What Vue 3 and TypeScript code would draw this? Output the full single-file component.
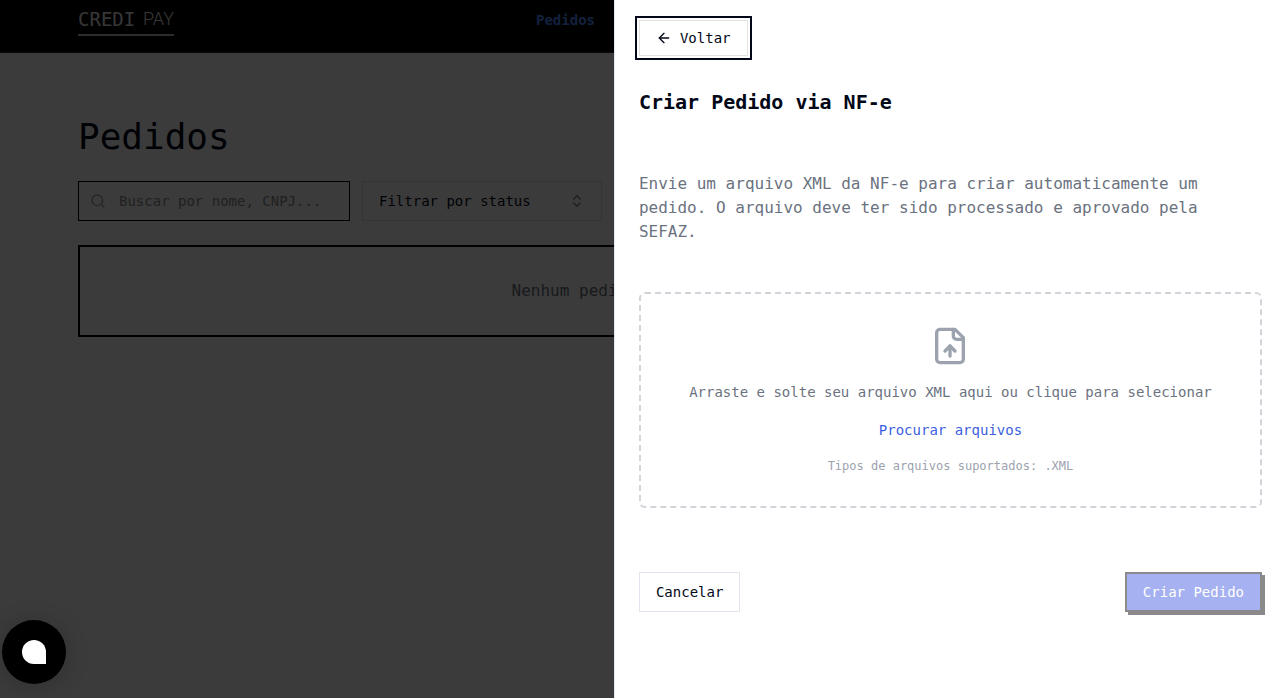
<script setup lang="ts">
import { ref } from 'vue'

const search = ref('')
const status = ref('')
const fileInput = ref<HTMLInputElement | null>(null)

function browse(): void {
  fileInput.value?.click()
}
</script>

<template>
  <div class="page">
    <header class="topbar">
      <a href="#" class="logo"><span class="logo-credi">CREDI</span><span class="logo-pay">PAY</span></a>
      <nav class="nav"><a href="#">Pedidos</a></nav>
    </header>
    <main class="content">
      <h1>Pedidos</h1>
      <div class="filters">
        <label class="search">
          <svg width="16" height="16" viewBox="0 0 24 24" fill="none" stroke="currentColor" stroke-width="2" stroke-linecap="round" stroke-linejoin="round" aria-hidden="true">
            <circle cx="11" cy="11" r="8" />
            <path d="m21 21-4.3-4.3" />
          </svg>
          <input v-model="search" type="text" aria-label="Buscar" placeholder="Buscar por nome, CNPJ..." />
        </label>
        <div class="status">
          <select v-model="status" aria-label="Filtrar por status">
            <option value="">Filtrar por status</option>
          </select>
          <svg width="16" height="16" viewBox="0 0 24 24" fill="none" stroke="currentColor" stroke-width="2" stroke-linecap="round" stroke-linejoin="round" aria-hidden="true">
            <path d="m7 15 5 5 5-5" />
            <path d="m7 9 5-5 5 5" />
          </svg>
        </div>
      </div>
      <section class="empty">Nenhum pedido encontrado.</section>
    </main>
  </div>

  <div class="overlay"></div>

  <aside class="drawer" role="dialog" aria-labelledby="drawer-title">
    <button type="button" class="back">
      <svg width="16" height="16" viewBox="0 0 24 24" fill="none" stroke="currentColor" stroke-width="2" stroke-linecap="round" stroke-linejoin="round" aria-hidden="true">
        <path d="m12 19-7-7 7-7" />
        <path d="M19 12H5" />
      </svg>
      Voltar
    </button>
    <h2 id="drawer-title">Criar Pedido via NF-e</h2>
    <p class="intro">
      Envie um arquivo XML da NF-e para criar automaticamente um pedido. O arquivo deve ter sido processado e aprovado pela SEFAZ.
    </p>
    <div class="dropzone">
      <svg width="40" height="40" viewBox="0 0 24 24" fill="none" stroke="currentColor" stroke-width="2" stroke-linecap="round" stroke-linejoin="round" aria-hidden="true">
        <path d="M15 2H6a2 2 0 0 0-2 2v16a2 2 0 0 0 2 2h12a2 2 0 0 0 2-2V7Z" />
        <path d="M14 2v4a2 2 0 0 0 2 2h4" />
        <path d="M12 12v6" />
        <path d="m15 15-3-3-3 3" />
      </svg>
      <p class="hint">Arraste e solte seu arquivo XML aqui ou clique para selecionar</p>
      <button type="button" class="browse" @click="browse">Procurar arquivos</button>
      <input ref="fileInput" type="file" accept=".xml" hidden aria-label="Procurar arquivos" />
      <p class="types">Tipos de arquivos suportados: .XML</p>
    </div>
    <div class="actions">
      <button type="button" class="cancel">Cancelar</button>
      <button type="button" class="create" disabled>Criar Pedido</button>
    </div>
  </aside>

  <button type="button" class="chat" aria-label="Chat"><span></span></button>
</template>

<style>
body {
  margin: 0;
  overflow: hidden;
  background: #fff;
}
</style>

<style scoped>
.page,
.drawer,
button,
input,
select {
  font-family: "DejaVu Sans Mono", monospace;
}
.page,
.drawer,
.page *,
.drawer * {
  box-sizing: border-box;
}
.page {
  min-height: 100vh;
  padding-right: 15px;
  color: #020817;
}
.topbar {
  display: flex;
  align-items: flex-start;
  height: 53px;
  margin-right: -15px;
  padding: 8px 78px 0;
  background: #000;
  border-bottom: 1px solid #333;
}
.logo {
  display: flex;
  align-items: center;
  justify-content: space-between;
  width: 96px;
  height: 28px;
  padding-bottom: 4px;
  border-bottom: 2px solid #c0c0c0;
  color: #e8e8e8;
  text-decoration: none;
}
.logo-credi {
  font: 400 19px/20px "DejaVu Sans Mono", monospace;
}
.logo-pay {
  font: 300 18px/20px Roboto, sans-serif;
}
.nav {
  margin-left: 362px;
}
.nav a {
  font-size: 14px;
  font-weight: 700;
  line-height: 24px;
  color: #5090ff;
  text-decoration: none;
}
.content {
  padding: 64px 78px 0;
}
h1 {
  margin: 0 0 24px;
  font-size: 36px;
  font-weight: 400;
  line-height: 40px;
}
.filters {
  display: flex;
  gap: 12px;
  margin-bottom: 24px;
}
.search {
  display: flex;
  align-items: center;
  gap: 13px;
  width: 272px;
  height: 40px;
  padding: 0 12px 0 11px;
  border: 1px solid #000;
  color: #a0a0a0;
}
.search svg {
  flex: none;
}
.search input {
  flex: 1;
  min-width: 0;
  padding: 0;
  border: 0;
  outline: 0;
  background: transparent;
  font-size: 14px;
}
.search input::placeholder {
  color: #8c8c8c;
  opacity: 1;
}
.status {
  position: relative;
  width: 240px;
  height: 40px;
}
.status select {
  width: 100%;
  height: 100%;
  padding: 0 16px;
  border: 1px solid #e2e2e2;
  border-radius: 0;
  appearance: none;
  background: transparent;
  color: #020817;
  font-size: 14px;
}
.status svg {
  position: absolute;
  top: 12px;
  right: 17px;
  color: #808080;
  pointer-events: none;
}
.empty {
  padding: 32px;
  border: 2px solid #000;
  color: #6b7280;
  font-size: 16px;
  line-height: 24px;
  text-align: center;
}
.overlay {
  position: fixed;
  inset: 0;
  background: rgba(0, 0, 0, 0.77);
}
.drawer {
  position: fixed;
  top: 0;
  right: 0;
  bottom: 0;
  width: 52%;
  padding: 20px 17px 0 24px;
  border-left: 1px solid #e2e8f0;
  background: #fff;
  color: #020817;
}
button {
  margin: 0;
  font-size: 14px;
  line-height: 20px;
}
.back {
  display: flex;
  align-items: center;
  gap: 8px;
  height: 36px;
  padding: 0 16px;
  border: 1px solid #e2e2e2;
  outline: 2px solid #020817;
  outline-offset: 2px;
  background: #fff;
  color: #020817;
}
h2 {
  margin: 32px 0 56px;
  font-size: 20px;
  font-weight: 700;
  line-height: 28px;
}
.intro {
  margin: 0 0 48px;
  color: #6b7280;
  font-size: 16px;
  line-height: 24px;
}
.dropzone {
  display: flex;
  flex-direction: column;
  align-items: center;
  padding: 32px;
  border: 2px dashed #d1d5db;
  border-radius: 6px;
  color: #9ca3af;
}
.hint {
  margin: 16px 0 18px;
  color: #6b7280;
  font-size: 14px;
  line-height: 20px;
}
.browse {
  padding: 0;
  border: 0;
  background: none;
  color: #3b5fe0;
}
.types {
  margin: 18px 0 0;
  font-size: 12px;
  line-height: 16px;
}
.actions {
  display: flex;
  justify-content: space-between;
  margin-top: 64px;
}
.cancel,
.create {
  height: 40px;
  padding: 0 16px;
}
.cancel {
  border: 1px solid #e2e4ee;
  background: #fff;
  color: #020817;
}
.create {
  border: 2px solid #8a8a8a;
  background: #a5b1f0;
  box-shadow: 3px 3px 0 #8a8a8a;
  color: #fff;
}
.chat {
  position: fixed;
  left: 2px;
  bottom: 14px;
  display: grid;
  place-items: center;
  width: 64px;
  height: 64px;
  padding: 0;
  border: 0;
  border-radius: 50%;
  background: #000;
  box-shadow: 0 2px 24px rgba(0, 0, 0, 0.2);
}
.chat span {
  width: 24px;
  height: 24px;
  border-radius: 50% 50% 0 50%;
  background: #fff;
}
</style>
